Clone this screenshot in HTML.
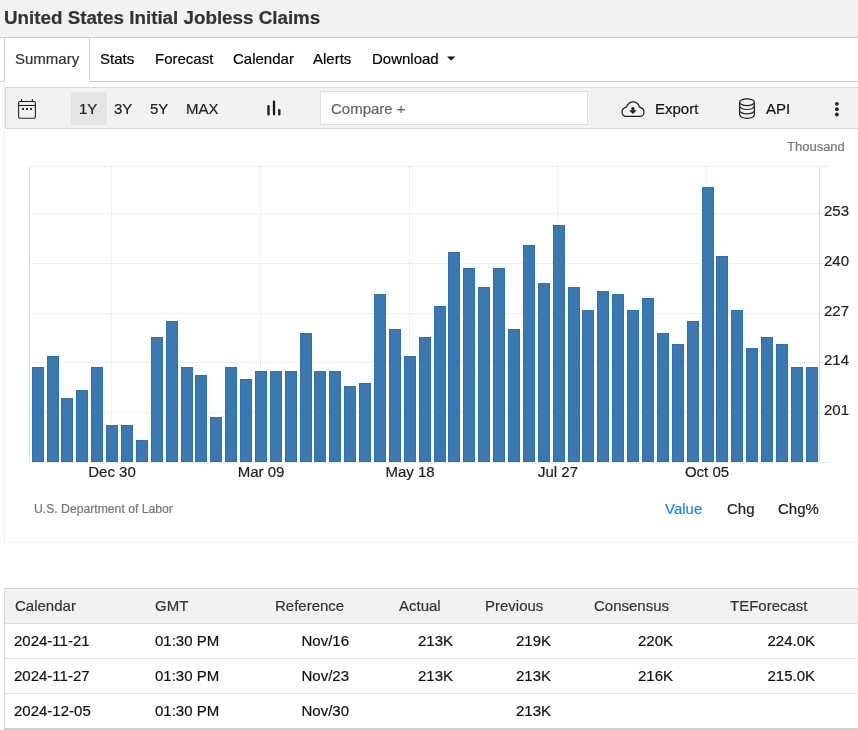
<!DOCTYPE html>
<html><head><meta charset="utf-8">
<style>
html,body{margin:0;padding:0;background:#fff;}
body{width:858px;height:730px;overflow:hidden;position:relative;font-family:"Liberation Sans",sans-serif;}
.a{position:absolute;}
.t{position:absolute;white-space:nowrap;line-height:1;font-size:15px;color:#111;will-change:transform;-webkit-text-stroke:0.2px currentColor;}
</style></head><body>
<!-- header -->
<div class="a" style="left:0;top:0;width:858px;height:37px;background:#f2f2f2"></div>
<div class="t" style="left:3.5px;top:9px;font-size:18.8px;font-weight:bold;color:#333">United States Initial Jobless Claims</div>
<div class="a" style="left:0;top:37px;width:858px;height:1px;background:#c9c9c9"></div>

<!-- tabs -->
<div class="a" style="left:-10px;top:37px;width:14px;height:44px;border-right:1px solid #cfcfcf;border-bottom:1px solid #cfcfcf;border-bottom-right-radius:2px"></div>
<div class="a" style="left:89px;top:37px;width:800px;height:44px;border-left:1px solid #cfcfcf;border-bottom:1px solid #cfcfcf;border-bottom-left-radius:2px"></div>
<div class="t" style="left:15px;top:51px;color:#333">Summary</div>
<div class="t" style="left:100px;top:51px;color:#000">Stats</div>
<div class="t" style="left:155px;top:51px;color:#000">Forecast</div>
<div class="t" style="left:233px;top:51px;color:#000">Calendar</div>
<div class="t" style="left:313px;top:51px;color:#000">Alerts</div>
<div class="t" style="left:372px;top:51px;color:#000">Download</div>
<svg class="a" style="left:446px;top:56px" width="10" height="5"><path d="M1 0.6 L9.4 0.6 L5.2 4.6 Z" fill="#111"/></svg>

<!-- chart container border -->
<div class="a" style="left:4px;top:81px;width:900px;height:461px;border-left:1px solid #efefef;border-bottom:1px solid #efefef"></div>

<!-- toolbar -->
<div class="a" style="left:5px;top:87px;width:900px;height:40px;background:#f2f2f2;border:1px solid #d8d8d8;border-right:none;border-radius:0 0 0 2px"></div>
<svg class="a" style="left:14px;top:95px" width="26" height="27" viewBox="0 0 26 27">
  <rect x="4.6" y="6.5" width="16.8" height="16.7" rx="1.1" fill="none" stroke="#222" stroke-width="1.1"/>
  <line x1="4.6" y1="10.5" x2="21.4" y2="10.5" stroke="#222" stroke-width="1.1"/>
  <line x1="7.5" y1="4" x2="7.5" y2="6.5" stroke="#222" stroke-width="1.1"/>
  <line x1="18.4" y1="4" x2="18.4" y2="6.5" stroke="#222" stroke-width="1.1"/>
  <rect x="8.1" y="13.1" width="1.8" height="1.8" fill="#000"/>
  <rect x="12" y="13.1" width="1.8" height="1.8" fill="#000"/>
  <rect x="16.1" y="13.1" width="1.8" height="1.8" fill="#000"/>
</svg>
<div class="a" style="left:71px;top:92px;width:36px;height:33px;background:#e5e5e5"></div>
<div class="t" style="left:79px;top:101px;color:#222">1Y</div>
<div class="t" style="left:114px;top:101px;color:#222">3Y</div>
<div class="t" style="left:150px;top:101px;color:#222">5Y</div>
<div class="t" style="left:186px;top:101px;color:#222">MAX</div>
<svg class="a" style="left:262px;top:96px" width="24" height="24">
  <line x1="6.5" y1="10.2" x2="6.5" y2="18.3" stroke="#222" stroke-width="2.4" stroke-linecap="round"/>
  <line x1="12" y1="5.6" x2="12" y2="18.3" stroke="#111" stroke-width="2.2" stroke-linecap="round"/>
  <line x1="17.3" y1="14.2" x2="17.3" y2="18.3" stroke="#222" stroke-width="2.4" stroke-linecap="round"/>
</svg>
<div class="a" style="left:320px;top:91px;width:266px;height:32px;background:#fff;border:1px solid #deded6"></div>
<div class="t" style="left:331px;top:101px;color:#666">Compare +</div>
<svg class="a" style="left:618px;top:96px" width="30" height="26" viewBox="0 0 30 26">
  <path d="M7.9 20.4 C5.5 20.4 4 18.3 4 16.1 C4 13.7 5.7 11.8 8.5 10.9 C9.7 7.7 12.1 5.8 15 5.8 C18.3 5.8 20.7 8.1 21.5 11.1 C24.1 11.8 26 13.8 26 16.2 C26 18.5 24.4 20.4 22.3 20.4 Z" fill="none" stroke="#222" stroke-width="1.3" stroke-linejoin="round"/>
  <rect x="13.4" y="11.2" width="3" height="3.4" fill="#222"/>
  <path d="M11.1 14.2 L18.8 14.2 L14.95 18.1 Z" fill="#222"/>
</svg>
<div class="t" style="left:655px;top:101px;color:#111">Export</div>
<svg class="a" style="left:736px;top:96px" width="22" height="26" viewBox="0 0 22 26">
  <ellipse cx="11" cy="6.2" rx="7.4" ry="3.4" fill="none" stroke="#222" stroke-width="1.2"/>
  <path d="M3.6 6.2 V18.8 C3.6 20.7 6.9 22.3 11 22.3 C15.1 22.3 18.4 20.7 18.4 18.8 V6.2" fill="none" stroke="#222" stroke-width="1.2"/>
  <path d="M3.6 10.1 C3.6 12 6.9 13.5 11 13.5 C15.1 13.5 18.4 12 18.4 10.1" fill="none" stroke="#222" stroke-width="1.2"/>
  <path d="M3.6 14.5 C3.6 16.4 6.9 17.9 11 17.9 C15.1 17.9 18.4 16.4 18.4 14.5" fill="none" stroke="#222" stroke-width="1.2"/>
</svg>
<div class="t" style="left:766px;top:101px;color:#111">API</div>
<svg class="a" style="left:830px;top:98px" width="14" height="22">
  <circle cx="6.9" cy="5.8" r="1.9" fill="#222"/>
  <circle cx="6.9" cy="11.2" r="1.9" fill="#222"/>
  <circle cx="6.9" cy="16.5" r="1.9" fill="#222"/>
</svg>

<!-- chart -->
<div class="t" style="left:787px;top:140px;font-size:13px;color:#777">Thousand</div>
<svg class="a" style="left:0;top:0" width="858" height="560" shape-rendering="crispEdges">
  <g stroke="#e0e0e0" stroke-width="1" stroke-dasharray="1 1" fill="none">
    <line x1="30" y1="166.5" x2="819" y2="166.5"/>
    <line x1="30" y1="213.5" x2="819" y2="213.5"/>
    <line x1="30" y1="263.5" x2="819" y2="263.5"/>
    <line x1="30" y1="313.5" x2="819" y2="313.5"/>
    <line x1="30" y1="362.5" x2="819" y2="362.5"/>
    <line x1="30" y1="412.5" x2="819" y2="412.5"/>
    <line x1="111.5" y1="167" x2="111.5" y2="462"/>
    <line x1="260.5" y1="167" x2="260.5" y2="462"/>
    <line x1="409.5" y1="167" x2="409.5" y2="462"/>
    <line x1="557.5" y1="167" x2="557.5" y2="462"/>
    <line x1="706.5" y1="167" x2="706.5" y2="462"/>
  </g>
  <g fill="#eeeeee">
    <rect x="820" y="166" width="9" height="1"/>
    <rect x="820" y="213" width="4" height="1"/>
    <rect x="820" y="263" width="4" height="1"/>
    <rect x="820" y="313" width="4" height="1"/>
    <rect x="820" y="362" width="4" height="1"/>
    <rect x="820" y="412" width="4" height="1"/>
    <rect x="30" y="462" width="799" height="1"/>
  </g>
  <rect x="29" y="167" width="1" height="295" fill="#dddddd"/>
  <rect x="819" y="167" width="1" height="295" fill="#dddddd"/>
<rect x="32" y="367" width="12" height="95" fill="#3070ad"/><rect x="33" y="368" width="10" height="93" fill="#3a78b1"/>
<rect x="47" y="356" width="12" height="106" fill="#3070ad"/><rect x="48" y="357" width="10" height="104" fill="#3a78b1"/>
<rect x="61" y="398" width="12" height="64" fill="#3070ad"/><rect x="62" y="399" width="10" height="62" fill="#3a78b1"/>
<rect x="76" y="390" width="12" height="72" fill="#3070ad"/><rect x="77" y="391" width="10" height="70" fill="#3a78b1"/>
<rect x="91" y="367" width="12" height="95" fill="#3070ad"/><rect x="92" y="368" width="10" height="93" fill="#3a78b1"/>
<rect x="106" y="425" width="12" height="37" fill="#3070ad"/><rect x="107" y="426" width="10" height="35" fill="#3a78b1"/>
<rect x="121" y="425" width="12" height="37" fill="#3070ad"/><rect x="122" y="426" width="10" height="35" fill="#3a78b1"/>
<rect x="136" y="440" width="12" height="22" fill="#3070ad"/><rect x="137" y="441" width="10" height="20" fill="#3a78b1"/>
<rect x="151" y="337" width="12" height="125" fill="#3070ad"/><rect x="152" y="338" width="10" height="123" fill="#3a78b1"/>
<rect x="166" y="321" width="12" height="141" fill="#3070ad"/><rect x="167" y="322" width="10" height="139" fill="#3a78b1"/>
<rect x="181" y="367" width="12" height="95" fill="#3070ad"/><rect x="182" y="368" width="10" height="93" fill="#3a78b1"/>
<rect x="195" y="375" width="12" height="87" fill="#3070ad"/><rect x="196" y="376" width="10" height="85" fill="#3a78b1"/>
<rect x="210" y="417" width="12" height="45" fill="#3070ad"/><rect x="211" y="418" width="10" height="43" fill="#3a78b1"/>
<rect x="225" y="367" width="12" height="95" fill="#3070ad"/><rect x="226" y="368" width="10" height="93" fill="#3a78b1"/>
<rect x="240" y="379" width="12" height="83" fill="#3070ad"/><rect x="241" y="380" width="10" height="81" fill="#3a78b1"/>
<rect x="255" y="371" width="12" height="91" fill="#3070ad"/><rect x="256" y="372" width="10" height="89" fill="#3a78b1"/>
<rect x="270" y="371" width="12" height="91" fill="#3070ad"/><rect x="271" y="372" width="10" height="89" fill="#3a78b1"/>
<rect x="285" y="371" width="12" height="91" fill="#3070ad"/><rect x="286" y="372" width="10" height="89" fill="#3a78b1"/>
<rect x="300" y="333" width="12" height="129" fill="#3070ad"/><rect x="301" y="334" width="10" height="127" fill="#3a78b1"/>
<rect x="314" y="371" width="12" height="91" fill="#3070ad"/><rect x="315" y="372" width="10" height="89" fill="#3a78b1"/>
<rect x="329" y="371" width="12" height="91" fill="#3070ad"/><rect x="330" y="372" width="10" height="89" fill="#3a78b1"/>
<rect x="344" y="386" width="12" height="76" fill="#3070ad"/><rect x="345" y="387" width="10" height="74" fill="#3a78b1"/>
<rect x="359" y="383" width="12" height="79" fill="#3070ad"/><rect x="360" y="384" width="10" height="77" fill="#3a78b1"/>
<rect x="374" y="294" width="12" height="168" fill="#3070ad"/><rect x="375" y="295" width="10" height="166" fill="#3a78b1"/>
<rect x="389" y="329" width="12" height="133" fill="#3070ad"/><rect x="390" y="330" width="10" height="131" fill="#3a78b1"/>
<rect x="404" y="356" width="12" height="106" fill="#3070ad"/><rect x="405" y="357" width="10" height="104" fill="#3a78b1"/>
<rect x="419" y="337" width="12" height="125" fill="#3070ad"/><rect x="420" y="338" width="10" height="123" fill="#3a78b1"/>
<rect x="434" y="306" width="12" height="156" fill="#3070ad"/><rect x="435" y="307" width="10" height="154" fill="#3a78b1"/>
<rect x="448" y="252" width="12" height="210" fill="#3070ad"/><rect x="449" y="253" width="10" height="208" fill="#3a78b1"/>
<rect x="463" y="268" width="12" height="194" fill="#3070ad"/><rect x="464" y="269" width="10" height="192" fill="#3a78b1"/>
<rect x="478" y="287" width="12" height="175" fill="#3070ad"/><rect x="479" y="288" width="10" height="173" fill="#3a78b1"/>
<rect x="493" y="268" width="12" height="194" fill="#3070ad"/><rect x="494" y="269" width="10" height="192" fill="#3a78b1"/>
<rect x="508" y="329" width="12" height="133" fill="#3070ad"/><rect x="509" y="330" width="10" height="131" fill="#3a78b1"/>
<rect x="523" y="245" width="12" height="217" fill="#3070ad"/><rect x="524" y="246" width="10" height="215" fill="#3a78b1"/>
<rect x="538" y="283" width="12" height="179" fill="#3070ad"/><rect x="539" y="284" width="10" height="177" fill="#3a78b1"/>
<rect x="553" y="225" width="12" height="237" fill="#3070ad"/><rect x="554" y="226" width="10" height="235" fill="#3a78b1"/>
<rect x="568" y="287" width="12" height="175" fill="#3070ad"/><rect x="569" y="288" width="10" height="173" fill="#3a78b1"/>
<rect x="582" y="310" width="12" height="152" fill="#3070ad"/><rect x="583" y="311" width="10" height="150" fill="#3a78b1"/>
<rect x="597" y="291" width="12" height="171" fill="#3070ad"/><rect x="598" y="292" width="10" height="169" fill="#3a78b1"/>
<rect x="612" y="294" width="12" height="168" fill="#3070ad"/><rect x="613" y="295" width="10" height="166" fill="#3a78b1"/>
<rect x="627" y="310" width="12" height="152" fill="#3070ad"/><rect x="628" y="311" width="10" height="150" fill="#3a78b1"/>
<rect x="642" y="298" width="12" height="164" fill="#3070ad"/><rect x="643" y="299" width="10" height="162" fill="#3a78b1"/>
<rect x="657" y="333" width="12" height="129" fill="#3070ad"/><rect x="658" y="334" width="10" height="127" fill="#3a78b1"/>
<rect x="672" y="344" width="12" height="118" fill="#3070ad"/><rect x="673" y="345" width="10" height="116" fill="#3a78b1"/>
<rect x="687" y="321" width="12" height="141" fill="#3070ad"/><rect x="688" y="322" width="10" height="139" fill="#3a78b1"/>
<rect x="702" y="187" width="12" height="275" fill="#3070ad"/><rect x="703" y="188" width="10" height="273" fill="#3a78b1"/>
<rect x="716" y="256" width="12" height="206" fill="#3070ad"/><rect x="717" y="257" width="10" height="204" fill="#3a78b1"/>
<rect x="731" y="310" width="12" height="152" fill="#3070ad"/><rect x="732" y="311" width="10" height="150" fill="#3a78b1"/>
<rect x="746" y="348" width="12" height="114" fill="#3070ad"/><rect x="747" y="349" width="10" height="112" fill="#3a78b1"/>
<rect x="761" y="337" width="12" height="125" fill="#3070ad"/><rect x="762" y="338" width="10" height="123" fill="#3a78b1"/>
<rect x="776" y="344" width="12" height="118" fill="#3070ad"/><rect x="777" y="345" width="10" height="116" fill="#3a78b1"/>
<rect x="791" y="367" width="12" height="95" fill="#3070ad"/><rect x="792" y="368" width="10" height="93" fill="#3a78b1"/>
<rect x="806" y="367" width="12" height="95" fill="#3070ad"/><rect x="807" y="368" width="10" height="93" fill="#3a78b1"/>
</svg>
<div class="t" style="left:824px;top:203px;font-size:15px;color:#222">253</div>
<div class="t" style="left:824px;top:253px;font-size:15px;color:#222">240</div>
<div class="t" style="left:824px;top:303px;font-size:15px;color:#222">227</div>
<div class="t" style="left:824px;top:352px;font-size:15px;color:#222">214</div>
<div class="t" style="left:824px;top:402px;font-size:15px;color:#222">201</div>
<div class="t" style="left:61.5px;width:100px;text-align:center;top:464px;font-size:15px;color:#222">Dec 30</div>
<div class="t" style="left:210.5px;width:100px;text-align:center;top:464px;font-size:15px;color:#222">Mar 09</div>
<div class="t" style="left:359.5px;width:100px;text-align:center;top:464px;font-size:15px;color:#222">May 18</div>
<div class="t" style="left:507.5px;width:100px;text-align:center;top:464px;font-size:15px;color:#222">Jul 27</div>
<div class="t" style="left:656.5px;width:100px;text-align:center;top:464px;font-size:15px;color:#222">Oct 05</div>
<div class="t" style="left:34px;top:503px;font-size:12.2px;color:#777">U.S. Department of Labor</div>
<div class="t" style="left:665px;top:501px;color:#118be6">Value</div>
<div class="t" style="left:727px;top:501px;color:#222">Chg</div>
<div class="t" style="left:778px;top:501px;color:#222">Chg%</div>

<!-- table -->
<div class="a" style="left:4px;top:588px;width:900px;height:34px;background:#f2f2f2;border-top:1px solid #d5d5d5;border-left:1px solid #d5d5d5"></div>
<div class="a" style="left:4px;top:623px;width:900px;height:105px;border-left:1px solid #d5d5d5"></div>
<div class="a" style="left:5px;top:623px;width:900px;height:1px;background:#dde1e5"></div>
<div class="a" style="left:5px;top:658px;width:900px;height:1px;background:#dde1e5"></div>
<div class="a" style="left:5px;top:693px;width:900px;height:1px;background:#dde1e5"></div>
<div class="a" style="left:4px;top:728px;width:900px;height:2px;background:#cfcfcf"></div>

<div class="t" style="left:14.5px;top:598px;color:#333">Calendar</div>
<div class="t" style="left:155px;top:598px;color:#333">GMT</div>
<div class="t" style="left:275px;top:598px;color:#333">Reference</div>
<div class="t" style="left:399px;top:598px;color:#333">Actual</div>
<div class="t" style="left:485px;top:598px;color:#333">Previous</div>
<div class="t" style="left:594px;top:598px;color:#333">Consensus</div>
<div class="t" style="left:730px;top:598px;color:#333">TEForecast</div>

<div class="t" style="left:14px;top:633px">2024-11-21</div>
<div class="t" style="left:155px;top:633px">01:30 PM</div>
<div class="t" style="left:249px;width:100px;text-align:right;top:633px">Nov/16</div>
<div class="t" style="left:353px;width:100px;text-align:right;top:633px">213K</div>
<div class="t" style="left:451px;width:100px;text-align:right;top:633px">219K</div>
<div class="t" style="left:573px;width:100px;text-align:right;top:633px">220K</div>
<div class="t" style="left:715px;width:100px;text-align:right;top:633px">224.0K</div>

<div class="t" style="left:14px;top:668px">2024-11-27</div>
<div class="t" style="left:155px;top:668px">01:30 PM</div>
<div class="t" style="left:249px;width:100px;text-align:right;top:668px">Nov/23</div>
<div class="t" style="left:353px;width:100px;text-align:right;top:668px">213K</div>
<div class="t" style="left:451px;width:100px;text-align:right;top:668px">213K</div>
<div class="t" style="left:573px;width:100px;text-align:right;top:668px">216K</div>
<div class="t" style="left:715px;width:100px;text-align:right;top:668px">215.0K</div>

<div class="t" style="left:14px;top:703px">2024-12-05</div>
<div class="t" style="left:155px;top:703px">01:30 PM</div>
<div class="t" style="left:249px;width:100px;text-align:right;top:703px">Nov/30</div>
<div class="t" style="left:451px;width:100px;text-align:right;top:703px">213K</div>
</body></html>
